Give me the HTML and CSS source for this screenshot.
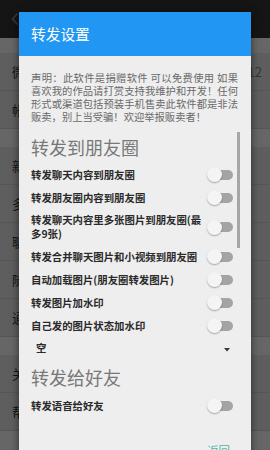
FILE: index.html
```html
<!DOCTYPE html>
<html lang="zh-CN">
<head>
<meta charset="utf-8">
<title>转发设置</title>
<link rel="stylesheet" href="styles.css">
</head>
<body>
<div class="screen">
  <div class="app">
    <div class="toolbar">
      <svg class="back" width="10" height="14" viewBox="0 0 10 14"><path d="M7.5 1.5 L2.5 7 L7.5 12.5" fill="none" stroke="#8a8a8a" stroke-width="1.6"/></svg>
    </div>
    <div class="band band-top"></div>
    <div class="item"><span>微信号</span><span class="val">12</span></div>
    <div class="item"><span>帐号设置</span></div>
    <div class="band"></div>
    <div class="item"><span>新消息</span></div>
    <div class="item"><span>多开</span></div>
    <div class="item"><span>聊天</span></div>
    <div class="item"><span>随机</span></div>
    <div class="item"><span>通用</span></div>
    <div class="band"></div>
    <div class="item"><span>关于</span></div>
    <div class="item"><span>帮助</span></div>
    <div class="band"></div>
  </div>
  <div class="scrim"></div>

  <div class="dialog">
    <div class="dlg-head">转发设置</div>
    <div class="dlg-body">
      <p class="notice">声明：此软件是捐赠软件 可以免费使用 如果喜欢我的作品请打赏支持我维护和开发！任何形式或渠道包括预装手机售卖此软件都是非法贩卖，别上当受骗！欢迎举报贩卖者！</p>

      <h2 class="sec">转发到朋友圈</h2>
      <div class="opt"><span class="lbl">转发聊天内容到朋友圈</span><span class="switch"><i class="track"></i><i class="thumb"></i></span></div>
      <div class="opt"><span class="lbl">转发朋友圈内容到朋友圈</span><span class="switch"><i class="track"></i><i class="thumb"></i></span></div>
      <div class="opt"><span class="lbl">转发聊天内容里多张图片到朋友圈(最多9张)</span><span class="switch"><i class="track"></i><i class="thumb"></i></span></div>
      <div class="opt"><span class="lbl">转发合并聊天图片和小视频到朋友圈</span><span class="switch"><i class="track"></i><i class="thumb"></i></span></div>
      <div class="opt"><span class="lbl">自动加载图片(朋友圈转发图片)</span><span class="switch"><i class="track"></i><i class="thumb"></i></span></div>
      <div class="opt"><span class="lbl">转发图片加水印</span><span class="switch"><i class="track"></i><i class="thumb"></i></span></div>
      <div class="opt"><span class="lbl">自己发的图片状态加水印</span><span class="switch"><i class="track"></i><i class="thumb"></i></span></div>
      <div class="spinner"><span>空</span><svg width="6" height="4" viewBox="0 0 6 4"><path d="M0 0 H6 L3 3.5 Z" fill="#3a3a3a"/></svg></div>

      <h2 class="sec sec2">转发给好友</h2>
      <div class="opt"><span class="lbl">转发语音给好友</span><span class="switch"><i class="track"></i><i class="thumb"></i></span></div>

      <div class="actions"><span class="btn">返回</span></div>
      <div class="scrollbar"></div>
    </div>
  </div>
</div>
</body>
</html>
```

FILE: styles.css
```css
* { box-sizing: border-box; }
html, body { margin: 0; padding: 0; }
body {
  width: 270px;
  height: 450px;
  overflow: hidden;
  font-family: "Noto Sans CJK SC", "Noto Sans", sans-serif;
  background: #000;
}
.screen {
  position: relative;
  width: 270px;
  height: 450px;
  overflow: hidden;
}

/* app behind the dialog */
.app {
  display: flex;
  flex-direction: column;
  height: 450px;
  background: #fff;
}
.toolbar {
  height: 38px;
  flex: none;
  background: #363636;
  display: flex;
  align-items: center;
  padding-left: 10px;
}
.band { height: 18px; flex: none; background: #fff; }
.band-top { height: 15px; }
.band:last-child { flex: 1; }
.item {
  height: 38px;
  flex: none;
  display: flex;
  align-items: center;
  justify-content: space-between;
  padding: 0 8px 0 12px;
  background: #ececec;
  border-bottom: 1px solid #d6d6d6;
  font-size: 13px;
  color: #333;
}
.item .val { color: #888; font-size: 13px; }

.scrim {
  position: absolute;
  inset: 0;
  background: rgba(0, 0, 0, 0.6);
}

/* dialog */
.dialog {
  position: absolute;
  left: 19px;
  top: 12px;
  width: 232px;
  height: 470px;
  background: #eeeeee;
  box-shadow: 0 2px 8px rgba(0, 0, 0, 0.55);
}
.dlg-head {
  height: 44px;
  background: #2196f3;
  color: #fff;
  font-size: 14.7px;
  line-height: 44px;
  padding-left: 12px;
}
.dlg-body {
  position: relative;
  padding: 14.5px 13px 0 12px;
}
.notice {
  margin: 0;
  font-size: 10.3px;
  line-height: 13.3px;
  color: #6a6a6a;
  text-align: justify;
}
.sec {
  margin: 11px 0 4.5px;
  font-size: 18px;
  line-height: 24px;
  font-weight: normal;
  color: #787878;
}
.sec2 { margin-top: 6.5px; margin-bottom: 5.5px; }

.opt {
  display: flex;
  align-items: center;
  gap: 4px;
  min-height: 23px;
  padding: 4px 5px 4px 0;
}
.lbl {
  flex: 1;
  font-size: 10.4px;
  line-height: 14px;
  font-weight: bold;
  color: #2a2a2a;
}
.switch {
  position: relative;
  flex: none;
  width: 26px;
  height: 15px;
}
.track {
  position: absolute;
  left: 6px;
  top: 2.5px;
  width: 20px;
  height: 10px;
  border-radius: 5px;
  background: #a4a4a4;
}
.thumb {
  position: absolute;
  left: 0;
  top: 0;
  width: 15px;
  height: 15px;
  border-radius: 50%;
  background: #f4f4f4;
  box-shadow: 0 1px 1.5px rgba(0, 0, 0, 0.3);
}

.spinner {
  height: 21px;
  display: flex;
  align-items: center;
  justify-content: space-between;
  padding: 0 8px 0 5px;
  font-size: 10.4px;
  font-weight: bold;
  color: #2a2a2a;
}
.spinner svg { margin-top: 5px; }

.actions {
  display: flex;
  justify-content: flex-end;
  margin-top: 23px;
  padding-right: 8px;
}
.btn {
  font-size: 11.5px;
  line-height: 20px;
  color: #4db6ac;
}

.scrollbar {
  position: absolute;
  left: 218px;
  top: 76px;
  width: 2.5px;
  height: 116px;
  background: #a6a6a6;
}
```
